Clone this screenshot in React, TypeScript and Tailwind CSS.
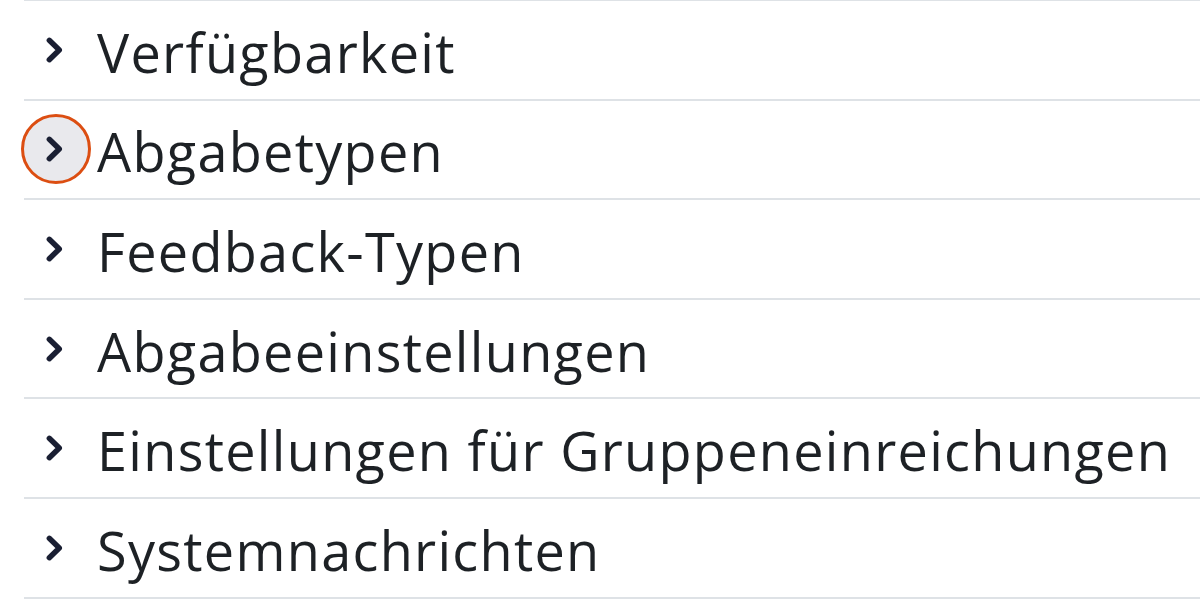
import React from "react";

const items = [
  "Verfügbarkeit",
  "Abgabetypen",
  "Feedback-Typen",
  "Abgabeeinstellungen",
  "Einstellungen für Gruppeneinreichungen",
  "Systemnachrichten",
];

function Chevron() {
  return (
    <svg width="17" height="26" viewBox="0 0 17 26" fill="none">
      <path d="M3.3 3.3 L13.3 13 L3.3 22.7" stroke="#1a1f33" strokeWidth="5.4" strokeLinecap="round" strokeLinejoin="round" />
    </svg>
  );
}

export default function App() {
  return (
    <div className="w-[1200px] h-[611px] overflow-hidden bg-white" style={{ fontFamily: "'Open Sans', sans-serif" }}>
      <div className="ml-[24px] -mt-[1px] border-b-2 border-[#dee2e6]">
        {items.map((t, i) => (
          <div key={t} className="h-[99.6px] border-t-2 border-[#dee2e6] flex items-center">
            <div className="relative w-[73px] h-full flex items-center">
              {i === 1 && (
                <div className="absolute left-[-3px] top-1/2 -translate-y-1/2 w-[70px] h-[70px] rounded-full bg-[#e9e9ed] border-[3px] border-[#dc4e12]" />
              )}
              <div className="relative ml-[22px] flex items-center">
                <Chevron />
              </div>
            </div>
            <span className="text-[54px] leading-none tracking-[1.3px] text-[#1d2125] mt-[4px] whitespace-nowrap">{t}</span>
          </div>
        ))}
      </div>
    </div>
  );
}
